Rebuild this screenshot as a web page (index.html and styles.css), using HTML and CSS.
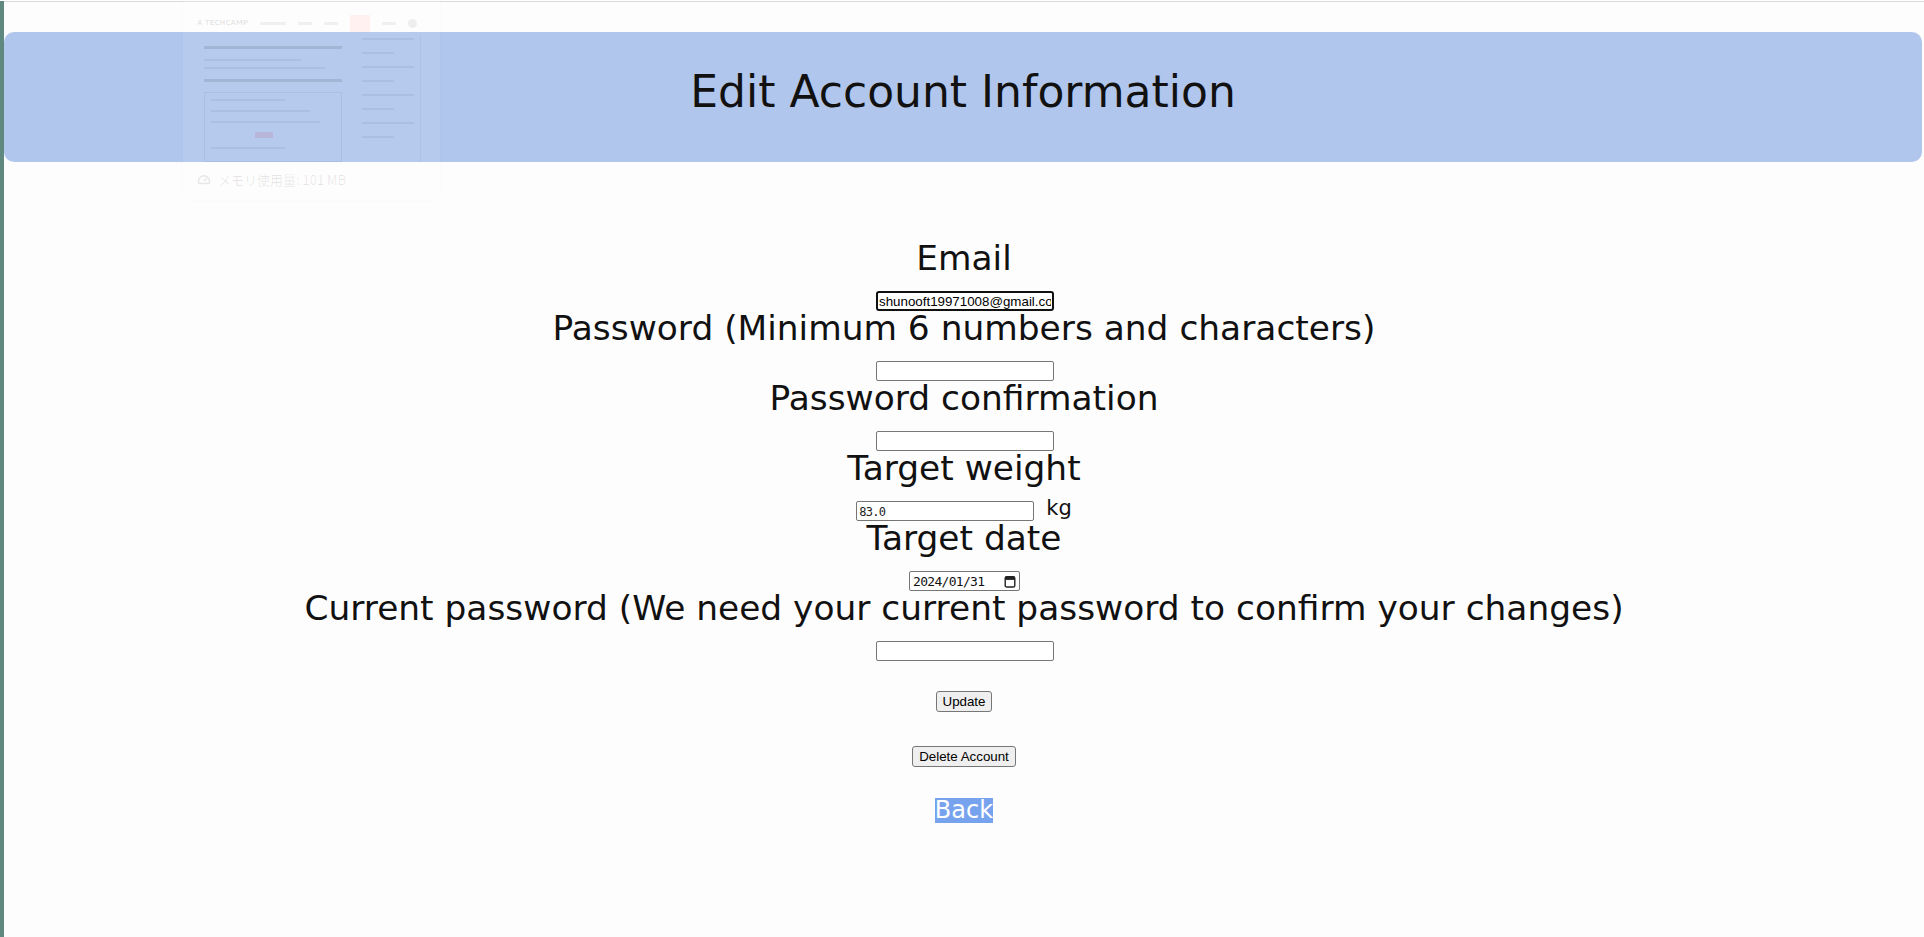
FILE: index.html
```html
<!DOCTYPE html>
<html lang="en">
<head>
<meta charset="utf-8">
<title>Edit Account Information</title>
<link rel="stylesheet" href="styles.css">
</head>
<body>
<div class="page">
  <div class="topline"></div>
  <header class="banner">
    <h1 class="title">Edit Account Information</h1>
  </header>
  <form class="form" onsubmit="return false">
    <div class="field">
      <label class="label" for="email">Email</label>
      <input class="input input-focused" id="email" type="text" value="shunooft19971008@gmail.com">
    </div>
    <div class="field">
      <label class="label" for="pw">Password (Minimum 6 numbers and characters)</label>
      <input class="input" id="pw" type="password">
    </div>
    <div class="field">
      <label class="label" for="pwc">Password confirmation</label>
      <input class="input" id="pwc" type="password">
    </div>
    <div class="field">
      <label class="label" for="tw">Target weight</label>
      <div class="weight-row">
        <input class="input input-mono" id="tw" type="text" value="83.0">
        <span class="unit">kg</span>
      </div>
    </div>
    <div class="field">
      <label class="label" for="td">Target date</label>
      <div class="date-input">
        <input class="date-text" id="td" type="text" value="2024/01/31">
        <svg class="cal-icon" width="12" height="13" viewBox="0 0 12 13" aria-hidden="true">
          <rect x="1.2" y="1.7" width="9.6" height="10.3" rx="1.6" fill="none" stroke="#222" stroke-width="1.4"/>
          <rect x="1.2" y="1.7" width="9.6" height="3.2" fill="#222"/>
        </svg>
      </div>
    </div>
    <div class="field">
      <label class="label" for="cpw">Current password (We need your current password to confirm your changes)</label>
      <input class="input" id="cpw" type="password">
    </div>
    <div class="action action-update"><button class="btn" type="submit">Update</button></div>
    <div class="action action-delete"><button class="btn" type="button">Delete Account</button></div>
    <div class="action action-back"><a class="back" href="#">Back</a></div>
  </form>
</div>

<div class="ghost" aria-hidden="true">
  <div class="ghost-head">
    <span class="ghost-logo">A TECHCAMP</span>
    <span class="ghost-nav"></span>
    <span class="ghost-nav ghost-nav-s"></span>
    <span class="ghost-nav ghost-nav-s"></span>
    <span class="ghost-red"></span>
    <span class="ghost-nav ghost-nav-s"></span>
    <span class="ghost-dot"></span>
  </div>
  <div class="ghost-main">
    <div class="ghost-left">
      <div class="ghost-bar"></div>
      <div class="ghost-line ghost-w1"></div>
      <div class="ghost-line ghost-w2"></div>
      <div class="ghost-bar"></div>
      <div class="ghost-box">
        <div class="ghost-line ghost-w3"></div>
        <div class="ghost-line ghost-w4"></div>
        <div class="ghost-line ghost-w2"></div>
        <div class="ghost-pink"></div>
        <div class="ghost-line ghost-w3"></div>
      </div>
    </div>
    <div class="ghost-right">
      <div class="ghost-line ghost-w5"></div>
      <div class="ghost-line ghost-w6"></div>
      <div class="ghost-line ghost-w5"></div>
      <div class="ghost-line ghost-w6"></div>
      <div class="ghost-line ghost-w5"></div>
      <div class="ghost-line ghost-w6"></div>
      <div class="ghost-line ghost-w5"></div>
      <div class="ghost-line ghost-w6"></div>
    </div>
  </div>
  <div class="ghost-foot">
    <svg width="14" height="14" viewBox="0 0 14 14"><path d="M2 10.5 A5.5 5.5 0 1 1 12 10.5 Z" fill="none" stroke="currentColor" stroke-width="1.4"/><path d="M7 8 L10 5" stroke="currentColor" stroke-width="1.4"/></svg>
    <span>メモリ使用量: 101 MB</span>
  </div>
</div>
</body>
</html>
```

FILE: styles.css
```css
html, body {
  margin: 0;
  padding: 0;
}

body {
  background: #fefdfd;
  font-family: "DejaVu Sans", "Noto Sans CJK JP", sans-serif;
  color: #111;
  overflow: hidden;
}

.page {
  border-left: 4px solid #5f897e;
  min-height: 937px;
  box-sizing: border-box;
}

.topline {
  height: 1px;
  margin-top: 1px;
  background: #dcdcdc;
}

.banner {
  margin: 30px 2px 0 0;
  height: 130px;
  background: #b1c6ec;
  border-radius: 10px;
  display: flex;
  justify-content: center;
}

.title {
  margin: 0;
  font-weight: normal;
  font-size: 44px;
  line-height: 120px;
  color: #111;
  white-space: nowrap;
}

.form {
  margin: 79px 0 0;
  display: flex;
  flex-direction: column;
  align-items: center;
}

.field {
  display: flex;
  flex-direction: column;
  align-items: center;
}

.label {
  font-size: 34.4px;
  line-height: 34px;
  margin-bottom: 16px;
  white-space: nowrap;
  color: #111;
}

.input {
  box-sizing: border-box;
  width: 178px;
  height: 20px;
  margin: 0 0 0 2px;
  padding: 1px 2px;
  border: 1px solid #767676;
  border-radius: 2px;
  background: #fff;
  font-family: "Liberation Sans", Arial, sans-serif;
  font-size: 13.33px;
  color: #000;
  outline: none;
}

.input-focused {
  border: 2px solid #101010;
  border-radius: 3px;
  padding: 0 1px;
}

.input-mono {
  font-family: "DejaVu Sans Mono", monospace;
  font-size: 12px;
  letter-spacing: -0.7px;
  padding-top: 3px;
  color: #222;
}

.weight-row {
  display: flex;
  align-items: flex-start;
  gap: 12px;
  height: 20px;
}

.weight-row .input {
  margin: 0;
}

.unit {
  font-size: 21px;
  line-height: 20px;
  margin-top: -3px;
  color: #111;
}

.date-input {
  box-sizing: border-box;
  width: 111px;
  height: 20px;
  margin-left: 1px;
  border: 1px solid #767676;
  border-radius: 2px;
  background: #fff;
  display: flex;
  align-items: center;
  justify-content: space-between;
  padding: 0 3px 0 3px;
}

.date-text {
  width: 80px;
  border: 0;
  padding: 0;
  margin: 0;
  background: transparent;
  font-family: "DejaVu Sans Mono", monospace;
  font-size: 13px;
  letter-spacing: -0.7px;
  color: #111;
  outline: none;
}

.cal-icon {
  display: block;
}

.action {
  display: flex;
  justify-content: center;
}

.action-update {
  margin-top: 30px;
}

.action-delete {
  margin-top: 34px;
}

.action-back {
  margin-top: 31px;
}

.btn {
  box-sizing: border-box;
  height: 21px;
  margin: 0;
  padding: 1px 6px;
  border: 1px solid #767676;
  border-radius: 3px;
  background: #efefef;
  font-family: "Liberation Sans", Arial, sans-serif;
  font-size: 13.33px;
  line-height: 17px;
  color: #000;
}

.back {
  display: inline-block;
  font-size: 24px;
  line-height: 25px;
  height: 25px;
  background: #77a3ee;
  color: #fff;
  text-decoration: none;
}

/* faint ghost overlay of another window */
.ghost {
  position: absolute;
  left: 183px;
  top: -12px;
  width: 257px;
  height: 212px;
  box-sizing: border-box;
  border-radius: 12px;
  background: rgba(255, 255, 255, 0.07);
  box-shadow: 0 0 4px rgba(0, 0, 0, 0.025);
  display: flex;
  flex-direction: column;
  pointer-events: none;
  padding: 0 0 0 14px;
}

.ghost-head {
  display: flex;
  align-items: center;
  gap: 12px;
  height: 22px;
  margin-top: 24px;
}

.ghost-logo {
  font-family: "DejaVu Sans", sans-serif;
  font-size: 7px;
  font-weight: bold;
  color: rgba(0, 0, 0, 0.1);
  white-space: nowrap;
}

.ghost-nav {
  width: 26px;
  height: 3px;
  background: rgba(0, 0, 0, 0.05);
}

.ghost-nav-s {
  width: 14px;
}

.ghost-red {
  width: 20px;
  height: 17px;
  background: rgba(255, 80, 60, 0.07);
}

.ghost-dot {
  width: 9px;
  height: 9px;
  border-radius: 50%;
  background: rgba(0, 0, 0, 0.06);
}

.ghost-main {
  display: flex;
  gap: 20px;
  margin-top: 0;
}

.ghost-left {
  width: 138px;
  display: flex;
  flex-direction: column;
  gap: 6px;
  padding-left: 7px;
  padding-top: 8px;
}

.ghost-bar {
  height: 3px;
  background: rgba(0, 0, 0, 0.1);
  margin: 4px 0;
}

.ghost-line {
  height: 2px;
  background: rgba(0, 0, 0, 0.05);
}

.ghost-w1 { width: 70%; }
.ghost-w2 { width: 88%; }
.ghost-w3 { width: 60%; }
.ghost-w4 { width: 80%; }
.ghost-w5 { width: 90%; }
.ghost-w6 { width: 55%; }

.ghost-box {
  height: 70px;
  border: 1px solid rgba(0, 0, 0, 0.05);
  display: flex;
  flex-direction: column;
  gap: 9px;
  padding: 6px 6px;
  box-sizing: border-box;
}

.ghost-pink {
  width: 18px;
  height: 6px;
  margin-left: 44px;
  background: rgba(200, 40, 80, 0.12);
}

.ghost-right {
  width: 58px;
  display: flex;
  flex-direction: column;
  gap: 12px;
  padding-top: 4px;
  border-right: 1px solid rgba(0, 0, 0, 0.04);
}

.ghost-foot {
  display: flex;
  align-items: center;
  gap: 7px;
  margin-top: 8px;
  color: rgba(0, 0, 0, 0.09);
  font-family: "Noto Sans CJK JP", sans-serif;
  font-size: 13px;
}
```
